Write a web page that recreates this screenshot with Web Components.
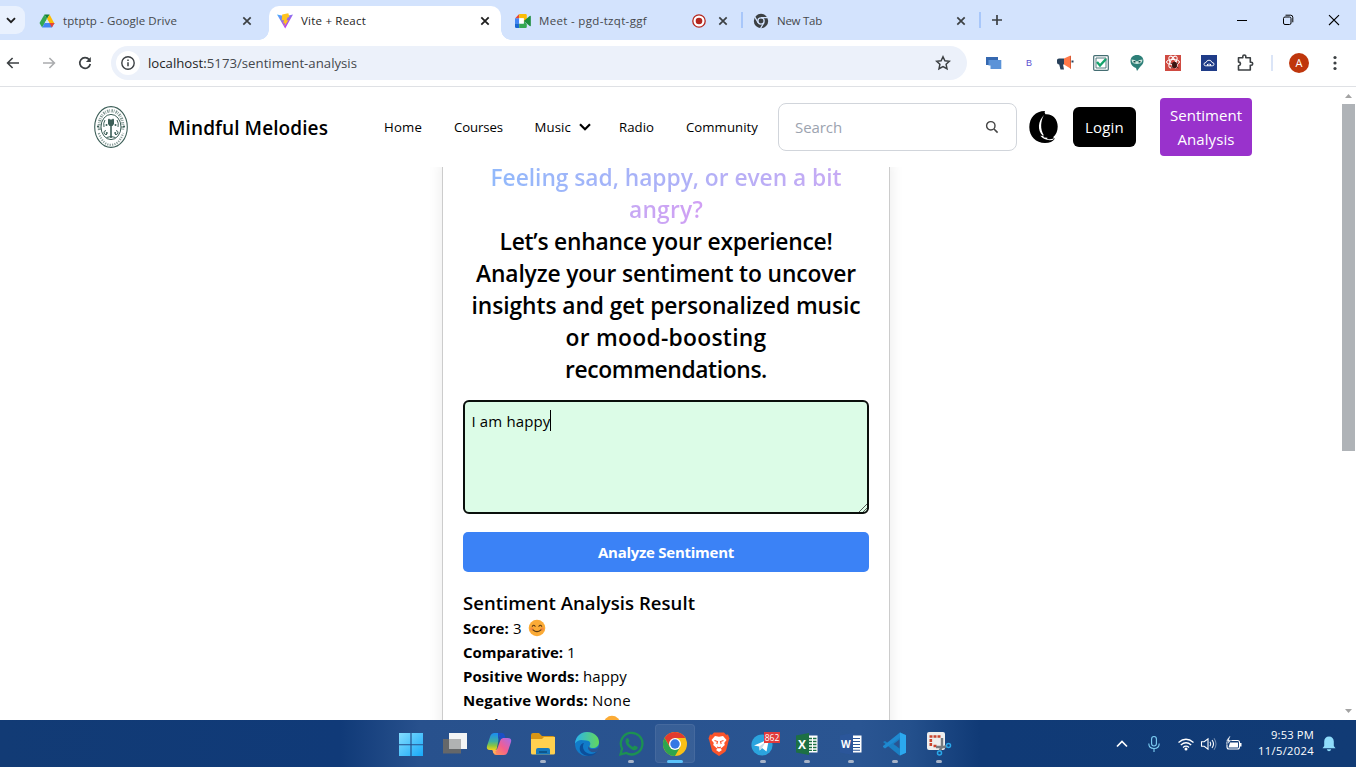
<!DOCTYPE html>
<html lang="en">
<head>
<meta charset="utf-8">
<title>Vite + React</title>
<style>
html,body{margin:0;height:100%;overflow:hidden;background:#fff;font-family:"Open Sans","Noto Sans",sans-serif}
</style>
</head>
<body>
<desktop-screen></desktop-screen>
<script>
const define = (name, css, html) => customElements.define(name, class extends HTMLElement {
  constructor() {
    super();
    this.attachShadow({mode: 'open'}).innerHTML = `<style>*{box-sizing:border-box}${css}</style>${html}`;
  }
});

/* One line of text, spaced to fill the width given in px by "w". */
class UiText extends HTMLElement {
  constructor() {
    super();
    this.attachShadow({mode: 'open'}).innerHTML = '<style>:host{display:inline-block;white-space:nowrap;flex:none;width:max-content}</style><slot></slot>';
  }
  connectedCallback() {
    const w = parseFloat(this.getAttribute('w'));
    if (!w) return;
    const natural = this.getBoundingClientRect().width;
    if (!natural) return;
    this.style.letterSpacing = ((w - natural) / this.textContent.length) + 'px';
    this.style.width = w + 'px';
  }
}

const face = '<circle cx="9" cy="9" r="8.3" fill="#fbab36"/><circle cx="3.8" cy="10" r="1.7" fill="#f58b3c"/><circle cx="14.2" cy="10" r="1.7" fill="#f58b3c"/><g fill="none" stroke="#5b3a14" stroke-width="1.1" stroke-linecap="round"><path d="M4.3 7.3q1.4-2 2.8 0M10.9 7.3q1.4-2 2.8 0M5 10.8q4 3.6 8 0"/></g>';
const ICONS = {
  down: [16,16,'<path d="M4 6.2l4 4 4-4" fill="none" stroke="#1f1f1f" stroke-width="1.9"/>'],
  drive: [16,16,'<path d="M5.4 1.5h5.2L8 6z" fill="#188038"/><path d="M5.4 1.5L.5 10l2.6 4.5L8 6z" fill="#34a853"/><path d="M10.6 1.5L8 6l3 5h4.6z" fill="#fbbc04"/><path d="M3.1 14.5h9.8L15.5 10H5.7z" fill="#4285f4"/><path d="M10.5 10h5l-2.6 4.5z" fill="#ea4335"/><path d="M8 6l2.4 4H5.7z" fill="#d3e3fd"/>'],
  x: [16,16,'<path d="M4.3 4.3l7.4 7.4M11.7 4.3l-7.4 7.4" stroke="#3c4043" stroke-width="1.7"/>'],
  xb: [16,16,'<path d="M4.3 4.3l7.4 7.4M11.7 4.3l-7.4 7.4" stroke="#1f1f1f" stroke-width="1.8"/>'],
  vite: [16,16,'<defs><linearGradient id="a" x1="0" y1="0" x2=".7" y2="1"><stop offset="0" stop-color="#41b4ff"/><stop offset=".6" stop-color="#a55ae8"/><stop offset="1" stop-color="#bd34fe"/></linearGradient></defs><path d="M0 1.600l8.200 14L16 1.600 8.200 3.200z" fill="url(#a)"/><path d="M11.300.2L5.200 1.400l-.5 6 2.200-.3-.6 3.300 1.800-.4-.8 3.600 4.300-6.600-2.200.4 1.200-3 1.800-.3z" fill="#ffc41f"/>'],
  meet: [16,14,'<path d="M0 4.4L4.2 0v4.4z" fill="#ea4335"/><path d="M4.2 0h6.4q1.2 0 1.2 1.2V6L8.7 8V4.2H4.2z" fill="#fbbc04"/><path d="M0 4.4h4.2v5.2H0z" fill="#4285f4"/><path d="M0 9.6h4.2V14H1.2Q0 14 0 12.8z" fill="#1967d2"/><path d="M4.2 9.6h4.5V7l3.1 3v2.8q0 1.2-1.2 1.2H4.2z" fill="#34a853"/><path d="M8.7 7l6-5q1.1-.6 1.1.5v9q0 1-1.1.5z" fill="#1e8e3e"/><path d="M4.2 4.2h4.6v5.4H4.2z" fill="#fff"/>'],
  rec: [16,16,'<circle cx="8" cy="8" r="6.200" fill="#fff" stroke="#b3261e" stroke-width="1.300"/><circle cx="8" cy="8" r="3.300" fill="#b3261e"/>'],
  chromeg: [16,16,'<circle cx="8" cy="8" r="7.2" fill="#3c4043"/><circle cx="8" cy="8" r="3.1" fill="#3c4043" stroke="#d3e3fd" stroke-width="1.3"/><path d="M8 4.7h7M5.1 9.6L1.6 3.6M10.9 9.6l-3.5 6" stroke="#d3e3fd" stroke-width="1.2"/>'],
  plus: [16,16,'<path d="M8 3v10M3 8h10" stroke="#3c4043" stroke-width="1.7"/>'],
  min: [16,16,'<path d="M3 8.5h10" stroke="#000"/>'],
  restore: [16,16,'<rect x="3.5" y="5" width="7.5" height="7.5" rx="1.5" fill="none" stroke="#000"/><path d="M5.5 3.2h5.2q2.1 0 2.1 2.1v5" fill="none" stroke="#000"/>'],
  wclose: [16,16,'<path d="M3 3.2l10 9.8M13 3.2L3 13" stroke="#000" stroke-width="1.1"/>'],
  back: [16,16,'<path d="M14 8H3M7.6 3L2.6 8l5 5" fill="none" stroke="#3c4043" stroke-width="1.6"/>'],
  fwd: [16,16,'<path d="M2 8h11M8.4 3l5 5-5 5" fill="none" stroke="#aaacae" stroke-width="1.6"/>'],
  reload: [16,16,'<path d="M12.2 4.6A5.3 5.3 0 1 0 13.3 9" fill="none" stroke="#3c4043" stroke-width="1.7"/><path d="M13.8 2v5H8.9z" fill="#3c4043"/>'],
  info: [24,24,'<circle cx="12" cy="12" r="12" fill="#fff"/><circle cx="12" cy="12" r="6.2" fill="none" stroke="#3c4043" stroke-width="1.4"/><path d="M12 11.2v4M12 8.4v1.5" stroke="#3c4043" stroke-width="1.5"/>'],
  star: [16,16,'<path d="M8 1.8l1.9 4 4.5.5-3.3 3 .9 4.4L8 11.5l-4 2.2.9-4.4-3.3-3 4.5-.5z" fill="none" stroke="#3c4043" stroke-width="1.5"/>'],
  windows: [16,14,'<path d="M0 1h12v8H0z" fill="#3568b0"/><path d="M2.500 4h12.800v9H4.500V9.500H2.500z" fill="#5b93d8"/>'],
  horn: [18,16,'<path d="M1 5q0-1.500 2-1.500h5v6H7l1 5H4.500L3.200 9.500Q1 9.300 1 7.500z" fill="#28405a"/><path d="M8 3.500L14 .7v12.600L8 9.500z" fill="#ff7849"/><path d="M14 .7h1v13h-1z" fill="#d95b35"/><path d="M15.500 5.500h2v2h-2z" fill="#28405a"/>'],
  check: [16,16,'<rect x=".7" y=".7" width="14.600" height="14.600" rx="1" fill="#fff" stroke="#446d72" stroke-width="1.200"/><path d="M3 3h10v10H3z" fill="none" stroke="#446d72" stroke-width=".9"/><path d="M4 7l3 3.500L13 4" fill="none" stroke="#14a36b" stroke-width="2.400"/>'],
  owl: [16,16,'<path d="M8 0c4 0 6.500 2.600 6.500 6 0 3-2 4-3.500 6l-3 4-1-3C4 12 1.500 9.500 1.500 6 1.500 2.600 4 0 8 0z" fill="#2d7f78"/><path d="M2.500 4.500q3 0 5.500 2 2.500-2 5.500-2-.5 4-3 4L8 9 5.500 8.500Q3 8.500 2.500 4.500z" fill="#cfe6de"/><path d="M4.500 6h2v1.500h-2zM9.500 6h2v1.500h-2z" fill="#124845"/>'],
  react: [16,16,'<path d="M0 0h16v16H0z" fill="#cf4a41"/><g fill="none" stroke="#fff" stroke-width="1"><ellipse cx="8" cy="7" rx="6.500" ry="2.600"/><ellipse cx="8" cy="7" rx="6.500" ry="2.600" transform="rotate(60 8 7)"/><ellipse cx="8" cy="7" rx="6.500" ry="2.600" transform="rotate(120 8 7)"/></g><ellipse cx="9.500" cy="10" rx="2.500" ry="3.200" fill="#3a1512"/><path d="M5.500 8l8 5M6 13l7-5" stroke="#3a1512" stroke-width=".8"/>'],
  cloud: [16,16,'<path d="M0 0h16v16H0z" fill="#1f3c88"/><path d="M4.700 10.800Q3 10.800 3 9.200t2-1.700Q5.600 5.200 8 5.200t3 2.300q2 0 2 1.700t-1.700 1.600z" fill="none" stroke="#fff" stroke-width=".9"/><path d="M6 9h1v1.800H6zM7.500 8.500h1v2.300h-1zM9 9h1v1.800H9z" fill="#fff"/>'],
  puzzle: [18,18,'<path d="M2.500 3.700h4.300V2.500a1.500 1.500 0 0 1 3 0v1.200h4.500v4.500h.9a1.500 1.500 0 0 1 0 3h-.9V16H2.500v-4.300q2-.3 2-1.900t-2-1.900z" fill="none" stroke="#3c4043" stroke-width="1.600" stroke-linejoin="round"/>'],
  dots: [16,16,'<g fill="#3c4043"><circle cx="8" cy="2.500" r="1.600"/><circle cx="8" cy="8" r="1.600"/><circle cx="8" cy="13.500" r="1.600"/></g>'],
  logo: [34,42,'<defs><path id="ring" d="M5.500 24C4 11 10 4.800 17 4.800S30 11 28.500 24"/><path id="low" d="M4.800 27C8 36 12 38.800 17 38.800S26 36 29.200 27"/></defs><g fill="none" stroke="#3d5f58"><ellipse cx="17" cy="21" rx="16.300" ry="20.400" stroke-width="1.100"/><use href="#ring" stroke-width="3.200" stroke-dasharray="1.400 .9 .7 1.300" opacity=".65"/><use href="#low" stroke-width="2.200" stroke-dasharray="1.200 1.200" opacity=".6"/><ellipse cx="17" cy="21" rx="10" ry="12.600" stroke-width="1"/><path d="M12 24.500q-2.500.5-2 2.500t3 1.500M22 24.500q2.500.5 2 2.500t-3 1.500M11 14q-2 3-1 7M23 14q2 3 1 7M12.500 31.500q4.500-2 9 0" stroke-width="1"/><path d="M17 19v13" stroke-width="1.600"/></g><path d="M14 13.500l1-1 1 1h2l1-1 1 1v4.500l-1.500 2h-3L14 18z" fill="#3d5f58"/><g fill="#3d5f58"><circle cx="4" cy="20.500" r="1.100"/><circle cx="30" cy="20.500" r="1.100"/><circle cx="12.500" cy="19" r="1"/><circle cx="21.500" cy="19" r="1"/><circle cx="12.800" cy="27" r="1"/><circle cx="21.200" cy="27" r="1"/></g>'],
  chev: [14,10,'<path d="M2 2.200l5 5 5-5" fill="none" stroke="#000" stroke-width="2.200"/>'],
  search: [14,14,'<circle cx="5.800" cy="5.800" r="4.200" fill="none" stroke="#444" stroke-width="1.400"/><path d="M9 9l3.600 3.600" stroke="#444" stroke-width="1.600"/>'],
  moon: [30,34,'<path d="M16 1C7 .8.300 7.500.300 17S7 33 16 33c4.500 0 8-1.500 10-4.500l-2-1.200C27 25 28.700 21 28.700 16.500 28.700 9 23.500 3.500 16.500 4.200 15.500 3 15.500 2 16 1z"/><path d="M15 5C9 11 8 20 13.800 25.800l1-.6C11 19 11.500 11 15 5z" fill="#fff"/><path d="M11.300 25.800l3.200.2q-.5 1 .8 1.500l3.200.3q-.7.600 0 1.200 4 1 8.300-1.500-3 3.300-7.500 2.600-4.500-.5-8-4.300z" fill="#fff"/>'],
  face: [18,18,face],
  up: [7,4,'<path d="M0 4L3.500 0 7 4z" fill="#a3a3a3"/>'],
  dn: [7,4,'<path d="M0 0l3.500 4L7 0z" fill="#a3a3a3"/>'],
  grip: [9,9,'<path d="M1 9l8-8M5 9l4-4" stroke="#444" stroke-width=".9"/>'],
  start: [24,24,'<defs><linearGradient id="a" x1="0" y1="0" x2="1" y2="1"><stop offset="0" stop-color="#84ddff"/><stop offset="1" stop-color="#18a9f8"/></linearGradient></defs><path d="M0 1h11.400v11.200H0zM12.600 1H24v11.200H12.600zM0 13.300h11.400V24H0zM12.600 13.300H24V24H12.600z" fill="url(#a)"/>'],
  task: [26,24,'<path d="M7 1h18v16H7z" fill="#f2f4f5"/><path d="M1 7h18v14.500H1z" fill="#656769"/><path d="M7 7h12v10H7z" fill="#b0b2b3"/>'],
  copilot: [26,24,'<defs><linearGradient id="a" x1="0" y1="0" x2="0" y2="1"><stop offset="0" stop-color="#1a8df2"/><stop offset=".5" stop-color="#3fb0a0"/><stop offset=".75" stop-color="#8cc63f"/><stop offset="1" stop-color="#f3d21c"/></linearGradient><linearGradient id="b" x1="1" y1="0" x2="0" y2="1"><stop offset="0" stop-color="#a56cf0"/><stop offset=".5" stop-color="#f25e90"/><stop offset="1" stop-color="#ff9b4c"/></linearGradient></defs><path d="M18 23h-8q-2 0-2.600-2l-.9-3h3q1.500 0 2-1.500l3-9Q15.200 6 17 6h5q4 0 3 4l-3.500 10.500Q20.500 23 18 23z" fill="url(#b)"/><path d="M8 1h8q-2 .5-2.600 2.500L10.800 16.500Q10.300 18 9 18H4Q0 18 1 14L4.500 3.500Q5.500 1 8 1z" fill="url(#a)"/><path d="M16 1q2 0 2.600 2l.9 3h-2.500q-1.800 0-2.500 1.500l-1 3 .5-7Q14.500 1 16 1zM12 1h4q-2 1-2.500 3L12 9z" fill="#1b4fc4"/><path d="M13.800 9.500l-2.600 8q-.7 2-2 1.800l1 2.700-2.800-1-.9-3h3q1.300 0 1.800-1.500z" fill="#ffb259"/>'],
  folder: [26,24,'<path d="M1 3q0-2 2-2h6l3 3h11q2 0 2 2v5H1z" fill="#d89514"/><path d="M1 7h11l2-2h11v16q0 1.500-1.500 1.500h-21Q1 22.500 1 21z" fill="#ffd04f"/><path d="M6 22.500V18q0-2 2-2h10q2 0 2 2v4.500z" fill="#1679bd"/><path d="M9 19h8v2H9z" fill="#0d568c"/>'],
  edge: [26,26,'<defs><linearGradient id="a" x1="0" y1="0" x2="1" y2="0"><stop offset="0" stop-color="#2bb2ec"/><stop offset="1" stop-color="#63d85b"/></linearGradient></defs><circle cx="13" cy="13" r="12" fill="#117bc9"/><path d="M1 12.500C2 5 7 1 13 1c7 0 12 4.500 12 10 0 4-3 6-6 6-3.500 0-4-1.500-3-3 1-1.500 0-4.500-3.500-4.500C8 9.500 5 7.500 1 12.500z" fill="url(#a)"/><path d="M10 12c-3 5 1 11 7 11q4 0 6.500-3C20 26 12 26.500 7.500 22 4 18 6 12.500 10 12z" fill="#0c4f9b"/><path d="M15.500 14c-1.500 2 0 4 3.500 4 3 0 5-1 6-3-.3 3-1 4-1.500 5-4 2.500-9 1-9.500-3z" fill="#2a5592"/>'],
  wa: [26,26,'<path d="M2.500 23.500l1.600-5.800A10.800 10.800 0 1 1 8.300 22z" fill="none" stroke="#1c9152" stroke-width="2.300"/><path d="M8.500 7.500q1-1 1.800 0l1.200 2.500-1.100 1.800q1.600 3 4.500 4.300l1.700-1.600 2.700 1.300q.8.500.2 1.800-1.500 2.200-4 1.600C11 17.500 8 13.800 7.500 11q-.2-2.200 1-3.500z" fill="#1c9152"/>'],
  chrome: [26,26,'<circle cx="13" cy="13" r="12" fill="#fbc116"/><path d="M2.600 7A12 12 0 0 1 23.400 7H13L8 16z" fill="#e33b2e"/><path d="M2.600 7A12 12 0 0 0 13 25l5.200-9H7.800z" fill="#2da44e"/><circle cx="13" cy="13" r="6" fill="#fff"/><circle cx="13" cy="13" r="4.700" fill="#3478e5"/>'],
  brave: [24,26,'<path d="M7 1.500h10l2 2.300 2-.3 1.500 4-.8 2-2.500 9.500q-.5 1.500-2 2.500L12 25l-5.200-3.500q-1.500-1-2-2.500L2.300 9.500l-.8-2 1.500-4 2 .3z" fill="#fb542b"/><path d="M8 5l4 .8L16 5l3.500 4-2.300 3 .6 2-3.300 3-1.200.5 1.700 1.500-3 2-3-2 1.700-1.500-1.200-.5-3.300-3 .6-2-2.300-3z" fill="#fff"/><path d="M7.500 9.500l3 1-.7 2.500M16.500 9.500l-3 1 .7 2.500M10 16l2 .8 2-.8" fill="none" stroke="#fb542b" stroke-width="1.100"/>'],
  tg: [26,26,'<circle cx="12" cy="14" r="10.600" fill="#2ba4de"/><path d="M4 14.500L19 8l-2.500 12.500-4.500-3.500-2.300 2.400-.5-4z" fill="#fff"/><path d="M9.200 15.400L16 10.500l-4 6.500-2.300 2.400z" fill="#c7dbea"/>'],
  excel: [26,26,'<path d="M14 4.500h9.500v17H14z" fill="#fff"/><path d="M15 7.500h7.500M15 10.500h7.500M15 13.500h7.500M15 16.500h7.500M15 19.300h7.500" stroke="#1d7044" stroke-width="1.300"/><path d="M18.500 5v16" stroke="#fff"/><path d="M2 4.500L15 2v22L2 21.500z" fill="#1d7044"/><text x="4" y="17.500" font-family="Open Sans,sans-serif" font-weight="700" font-size="12" fill="#fff">X</text>'],
  word: [26,26,'<path d="M14 4.500h9.500v17H14z" fill="#fff"/><path d="M15 7.500h7M15 10.500h7M15 13.500h7M15 16.500h7M15 19.300h7" stroke="#2c5696" stroke-width="1.100"/><path d="M2 4.500L15 2v22L2 21.500z" fill="#2b569a"/><text x="3" y="17.200" font-family="Open Sans,sans-serif" font-weight="700" font-size="10" fill="#fff">W</text>'],
  code: [26,26,'<path d="M18 1.500L6.500 12.500 3 10 1 11l16.500 13.500L24 21.700V4z" fill="#1b80c4"/><path d="M18 1.500l6 2.700v17.600l-6 2.700z" fill="#2ba8ef"/><path d="M1 16l2 1.500L18 6.500v-5L1 15z" fill="#1f8ad2"/><path d="M17.500 8.500v9L11.500 13z" fill="#2a5592"/>'],
  snip: [28,26,'<rect x="2" y="1" width="18" height="18" rx="2" fill="#eee"/><path d="M4.500 5.500h12M5.800 8v8M8.500 15h4" fill="none" stroke="#c8432d" stroke-width="2.600" stroke-dasharray="3 1"/><path d="M17 7v9l-2.500 4M11 16h8l3-1" fill="none" stroke="#777b80" stroke-width="2.400"/><circle cx="14.500" cy="22" r="2" fill="none" stroke="#29a8ea" stroke-width="1.500"/><circle cx="23.500" cy="14.500" r="2" fill="none" stroke="#29a8ea" stroke-width="1.500"/>'],
  tup: [16,16,'<path d="M3 10.500l5-5 5 5" fill="none" stroke="#fff" stroke-width="1.700"/>'],
  mic: [16,18,'<g fill="none" stroke="#7fd0f5" stroke-width="1.100"><rect x="5.600" y="1.500" width="4.800" height="9.500" rx="2.400"/><path d="M2.800 8.500q0 5 5.200 5t5.200-5M8 13.500V17"/></g>'],
  wifi: [18,16,'<g fill="none" stroke="#fff" stroke-width="1.300"><path d="M1.500 6.500q7.500-6.500 15 0M3.800 9q5.200-4.500 10.400 0M6 11.400q3-2.600 6 0"/></g><circle cx="9" cy="13" r="1.500" fill="#fff"/>'],
  vol: [18,16,'<g fill="none" stroke="#fff" stroke-width="1.100"><path d="M1.500 5.800h2.700L8 2.800v10.400L4.200 10.200H1.500z"/><path d="M10 5.800q1.600 2.200 0 4.400M12 4q3 4 0 8"/><path d="M14 2.200q4 5.800 0 11.600" opacity=".4"/></g>'],
  bat: [18,16,'<rect x="2" y="4.500" width="12.500" height="8.500" rx="2" fill="none" stroke="#fff" stroke-width="1.100"/><path d="M5 6.500h8v5H3.500z" fill="#fff"/><path d="M15 7h1.500v3.500H15z" fill="#fff"/><path d="M4.500 0L1 5h2.200L2 8.800 6.500 4H4l1.500-4z" fill="#fff" stroke="#113b75" stroke-width=".5"/>'],
  bell: [16,18,'<path d="M8 1.500c3 0 4.800 2 4.800 5V11l1.700 2.200H1.500L3.200 11V6.500c0-3 1.800-5 4.800-5zM5.800 14.200h4.400q-.5 2-2.200 2t-2.200-2z" fill="#8fdcfb"/>']
};
class UiIcon extends HTMLElement {
  constructor() { super(); this.attachShadow({mode: 'open'}); }
  connectedCallback() {
    const [w, h, body] = ICONS[this.getAttribute('name')];
    this.shadowRoot.innerHTML = `<style>:host{display:inline-block;flex:none;width:${w}px;height:${h}px}svg{display:block}</style><svg width="${w}" height="${h}" viewBox="0 0 ${w} ${h}">${body}</svg>`;
  }
}

define('browser-tab', `
:host{display:flex;align-items:center;height:34px;padding:0 10px 5px 14px;font-size:11.500px;color:#45484c;position:relative;flex:none}
:host([active]){background:#fff;border-radius:10px 10px 0 0;color:#1f1f1f}
:host([active])::before,:host([active])::after{content:"";position:absolute;bottom:0;width:10px;height:10px}
:host([active])::before{left:-10px;background:radial-gradient(circle at 0 0,transparent 9.500px,#fff 10px)}
:host([active])::after{right:-10px;background:radial-gradient(circle at 100% 0,transparent 9.500px,#fff 10px)}
slot[name=end]{display:flex;align-items:center;margin-left:auto;gap:8px}
slot[name=icon]{display:flex;margin-right:8px}`,
`<slot name="icon"></slot><slot></slot><span style="flex:1"></span><slot name="end"></slot>`);

define('tab-strip', `
:host{display:flex;height:40px;background:#d3e3fd;align-items:flex-end;flex:none}
.drop{width:25px;height:28px;align-self:center;background:#e9f1fe;border-radius:0 9px 9px 0;display:flex;align-items:center;padding-left:3px}
i{width:2px;height:16px;background:#a8c7fa;margin-bottom:12px;flex:none}
.plus{margin:0 0 12px 8px}.win{display:flex;gap:30px;margin:0 14px 12px auto}`,
`<div class="drop"><ui-icon name="down"></ui-icon></div>
<browser-tab style="width:244px;padding-right:14px"><ui-icon slot="icon" name="drive"></ui-icon><ui-text w="114">tptptp - Google Drive</ui-text><ui-icon slot="end" name="x"></ui-icon></browser-tab>
<browser-tab active style="width:232px;padding-left:8px;padding-right:8px"><ui-icon slot="icon" name="vite"></ui-icon><ui-text w="65">Vite + React</ui-text><ui-icon slot="end" name="xb"></ui-icon></browser-tab>
<browser-tab style="width:240px"><ui-icon slot="icon" name="meet"></ui-icon><ui-text w="108">Meet - pgd-tzqt-ggf</ui-text><ui-icon slot="end" name="rec"></ui-icon><ui-icon slot="end" name="x"></ui-icon></browser-tab>
<i></i>
<browser-tab style="width:236px;padding-left:10px"><ui-icon slot="icon" name="chromeg"></ui-icon><ui-text w="45">New Tab</ui-text><ui-icon slot="end" name="x"></ui-icon></browser-tab>
<i></i><ui-icon class="plus" name="plus"></ui-icon>
<div class="win"><ui-icon name="min"></ui-icon><ui-icon name="restore"></ui-icon><ui-icon name="wclose"></ui-icon></div>`);

define('tool-bar', `
:host{display:flex;height:47px;background:#fff;border-bottom:1px solid #dfe1e5;align-items:center;flex:none}
.nav{display:flex;gap:20px;padding-left:5px;width:111px}
.omni{display:flex;align-items:center;width:856px;height:34px;border-radius:17px;background:#ecf1fa;padding:0 16px 0 5px;font-size:13.200px;color:#45484c}
.omni ui-text{margin-left:8px}.omni b{font-weight:400;color:#1f1f1f}
.ext{display:flex;margin-left:8px}.ext>*{width:36px;display:flex;justify-content:center;align-items:center;height:24px}
.ext>:first-child{padding-left:1px}
.b{font:9px "Liberation Sans",sans-serif;color:#5a4fd0}
i{width:2px;height:16px;background:#dbe5f7;margin-left:8px}
.av{width:20px;height:20px;border-radius:50%;background:#bf360c;color:#fff;font-size:11px;line-height:20px;text-align:center;margin:0 18px 0 16px}`,
`<div class="nav"><ui-icon name="back"></ui-icon><ui-icon name="fwd"></ui-icon><ui-icon name="reload"></ui-icon></div>
<div class="omni"><ui-icon name="info"></ui-icon><ui-text w="209"><b>localhost:</b>5173/sentiment-analysis</ui-text><span style="flex:1"></span><ui-icon name="star"></ui-icon></div>
<div class="ext"><span><ui-icon name="windows"></ui-icon></span><span class="b">B</span><span><ui-icon name="horn"></ui-icon></span><span><ui-icon name="check"></ui-icon></span><span><ui-icon name="owl"></ui-icon></span><span><ui-icon name="react"></ui-icon></span><span><ui-icon name="cloud"></ui-icon></span><span><ui-icon name="puzzle"></ui-icon></span></div>
<i></i><div class="av">A</div><ui-icon name="dots"></ui-icon>`);

define('nav-bar', `
:host{display:flex;height:80px;align-items:center;padding-left:94px;background:#fff;flex:none;position:relative;z-index:1}
.title{font-size:19px;font-weight:600;margin:1px 0 0 40px;color:#000}
nav{display:flex;align-items:center;margin-left:56px;font-size:13.200px;color:#000;gap:32px;width:394px}
.m{display:flex;align-items:center;gap:7px;margin:0 -5px 0 -.5px}
.s{width:239px;height:48px;border:1px solid #d1d5db;border-radius:8px;display:flex;align-items:center;justify-content:space-between;padding:0 17px 0 16px;font-size:15px;color:#9ca3af}
.moon{margin-left:12px}
.l{width:63px;height:40px;border-radius:6px;background:#000;color:#fff;display:grid;place-items:center;font-size:15px;margin-left:14px}
.a{width:92px;height:58px;border-radius:4px;background:#9932cc;color:#fff;text-align:center;font-size:15px;line-height:24px;padding-top:5px;margin-left:24px}`,
`<ui-icon name="logo"></ui-icon><ui-text class="title" w="160">Mindful Melodies</ui-text>
<nav><ui-text w="38">Home</ui-text><ui-text w="49">Courses</ui-text><span class="m"><ui-text w="36.500">Music</ui-text><ui-icon name="chev"></ui-icon></span><ui-text w="35">Radio</ui-text><ui-text w="72">Community</ui-text></nav>
<div class="s"><ui-text w="47">Search</ui-text><ui-icon name="search"></ui-icon></div>
<ui-icon class="moon" name="moon"></ui-icon><div class="l"><ui-text w="39">Login</ui-text></div>
<div class="a"><ui-text w="72">Sentiment</ui-text><br><ui-text w="57">Analysis</ui-text></div>`);

define('result-row', `
:host{display:flex;height:24px;line-height:24px;align-items:center;font-size:15px;color:#000;gap:4px}
slot[name=label]{font-weight:700}`, `<slot name="label"></slot><slot></slot>`);

define('sentiment-card', `
:host{display:block;width:448px;margin-left:442px;border:solid #ccc;border-width:0 1px;box-shadow:0 0 14px rgba(0,0,0,.09);padding:0 20px;height:640px;margin-top:-6px;background:#fff}
h2{margin:0;padding-top:1px;font-size:22.800px;font-weight:600;line-height:32px;text-align:center;color:#000;height:233px}
h2 ui-text{display:block;margin:0 auto}
.g{background-clip:text;-webkit-background-clip:text;color:transparent}
.ta{height:114px;border:2px solid #0a0f0c;border-radius:6px;background:#dcfce7;margin-top:6px;padding:7px 6.500px;display:flex;font-size:15px;line-height:24px;position:relative}
.caret{width:1px;height:21px;background:#000;margin:1px 0 0 -1px}
.ta ui-icon{position:absolute;right:0;bottom:0}
.btn{height:40px;border-radius:5px;background:#3b82f6;color:#fff;font-weight:700;font-size:15px;display:grid;place-items:center;margin-top:18px}
h3{margin:17px 0 0;height:27px;line-height:28px;font-size:18.500px;font-weight:600;color:#000}
.pos{color:#22b573}`,
`<h2><ui-text class="g" w="351" style="background-image:linear-gradient(90deg,#92b9fb,#c7aaf4)">Feeling sad, happy, or even a bit</ui-text>
<ui-text class="g" w="74" style="background-image:linear-gradient(90deg,#c6a9f4,#d09ff4)">angry?</ui-text>
<ui-text w="333">Let’s enhance your experience!</ui-text>
<ui-text w="380">Analyze your sentiment to uncover</ui-text>
<ui-text w="389">insights and get personalized music</ui-text>
<ui-text w="201">or mood-boosting</ui-text>
<ui-text w="202">recommendations.</ui-text></h2>
<div class="ta"><ui-text w="79">I am happy</ui-text><span class="caret"></span><ui-icon name="grip"></ui-icon></div>
<div class="btn"><ui-text w="136">Analyze Sentiment</ui-text></div>
<h3><ui-text w="232">Sentiment Analysis Result</ui-text></h3>
<result-row><ui-text slot="label" w="46">Score:</ui-text><ui-text w="9">3</ui-text><ui-icon name="face" style="margin-left:2px"></ui-icon></result-row>
<result-row><ui-text slot="label" w="100">Comparative:</ui-text><ui-text w="9">1</ui-text></result-row>
<result-row><ui-text slot="label" w="116">Positive Words:</ui-text><ui-text w="44">happy</ui-text></result-row>
<result-row><ui-text slot="label" w="125">Negative Words:</ui-text><ui-text w="39">None</ui-text></result-row>
<result-row><ui-text slot="label" w="76">Sentiment:</ui-text><ui-text class="pos" w="56">Positive</ui-text><ui-icon name="face"></ui-icon></result-row>`);

define('scroll-bar', `
:host{display:flex;flex-direction:column;align-items:center;width:15px;background:#fff;padding:7px 0 7px;flex:none;z-index:2}
.t{width:13px;height:347px;background:#afb3b7;margin:6px 0 auto}`,
`<ui-icon name="up"></ui-icon><div class="t"></div><ui-icon name="dn"></ui-icon>`);

define('web-page', `
:host{display:flex;height:633px;overflow:hidden;flex:none}
main{width:1341px;overflow:hidden}`,
`<main><nav-bar></nav-bar><sentiment-card></sentiment-card></main><scroll-bar></scroll-bar>`);

define('task-item', `
:host{display:flex;flex-direction:column;align-items:center;justify-content:center;width:44px;height:47px;position:relative}
:host([active])::before{content:"";position:absolute;inset:4px 2px;background:rgba(255,255,255,.07);border:1px solid rgba(255,255,255,.07);border-radius:4px}
:host([open])::after{content:"";position:absolute;bottom:4px;width:6px;height:3px;border-radius:2px;background:#a6b3c8}
:host([active])::after{width:16px;background:#5cc3fa}
::slotted(ui-icon){position:relative;top:.5px}
::slotted(.badge){position:absolute;top:12px;left:23px;background:#e23b3b;color:#fff;font-size:8.500px;line-height:11px;height:11px;width:16px;text-align:center}`, `<slot></slot>`);

define('task-bar', `
:host{display:flex;height:47px;flex:none;background:linear-gradient(90deg,#123b75 0,#103a78 340px,#28518d 420px,#2a5592 860px,#24508c 910px,#103a76 980px,#113b75 100%);align-items:center;color:#fff}
.items{display:flex;margin-left:389px;width:572px}
.tray{display:flex;align-items:center;margin-left:153px}
.clock{font-size:11.200px;line-height:16px;text-align:right;margin:-1px 0 0 15px;width:56px}
.clock ui-text{display:block;margin-left:auto}`,
`<div class="items">
<task-item><ui-icon name="start"></ui-icon></task-item><task-item><ui-icon name="task"></ui-icon></task-item><task-item><ui-icon name="copilot"></ui-icon></task-item>
<task-item open><ui-icon name="folder"></ui-icon></task-item><task-item><ui-icon name="edge"></ui-icon></task-item><task-item open><ui-icon name="wa"></ui-icon></task-item>
<task-item open active><ui-icon name="chrome"></ui-icon></task-item><task-item><ui-icon name="brave"></ui-icon></task-item>
<task-item open><ui-icon name="tg"></ui-icon><span class="badge">862</span></task-item><task-item open><ui-icon name="excel"></ui-icon></task-item>
<task-item open><ui-icon name="word"></ui-icon></task-item><task-item open><ui-icon name="code"></ui-icon></task-item><task-item open><ui-icon name="snip"></ui-icon></task-item></div>
<div class="tray"><ui-icon name="tup"></ui-icon><ui-icon name="mic" style="margin-left:16px"></ui-icon><ui-icon name="wifi" style="margin-left:15px"></ui-icon><ui-icon name="vol" style="margin-left:5px"></ui-icon><ui-icon name="bat" style="margin-left:7px"></ui-icon>
<div class="clock"><ui-text w="43">9:53 PM</ui-text><ui-text w="56">11/5/2024</ui-text></div><ui-icon name="bell" style="margin-left:7px"></ui-icon></div>`);

define('desktop-screen', `:host{display:flex;flex-direction:column;width:1356px;height:767px;overflow:hidden}`,
`<tab-strip></tab-strip><tool-bar></tool-bar><web-page></web-page><task-bar></task-bar>`);

customElements.define('ui-icon', UiIcon);
customElements.define('ui-text', UiText);
</script>
</body>
</html>
